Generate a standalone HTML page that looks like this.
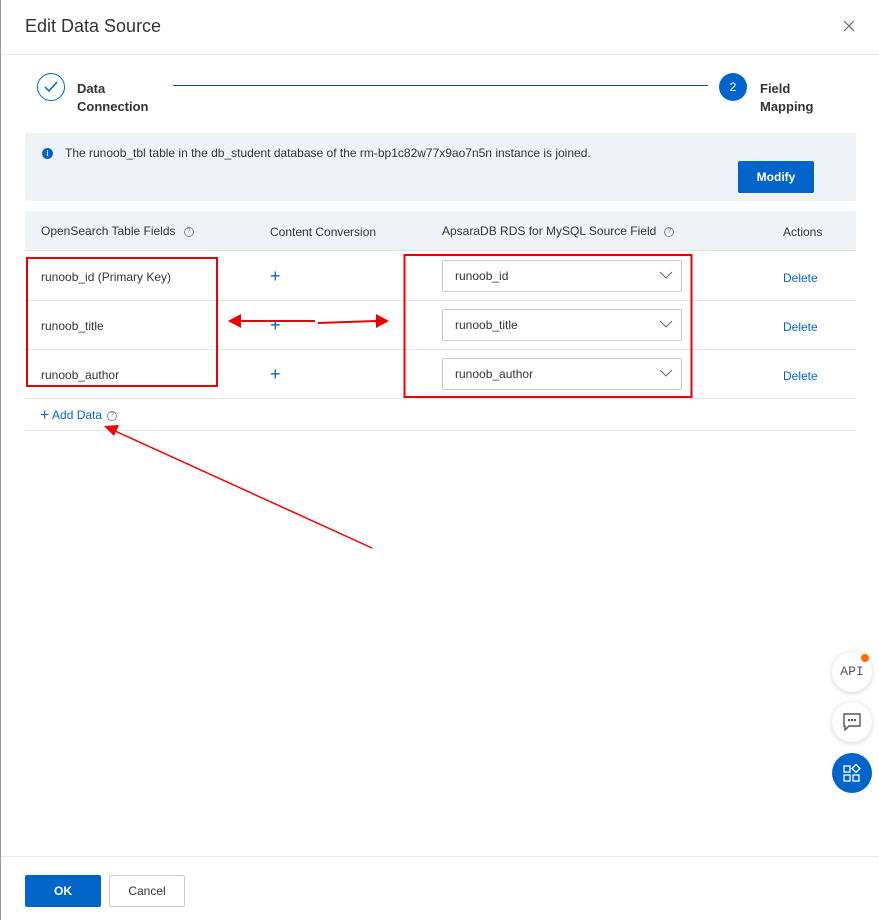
<!DOCTYPE html>
<html><head><meta charset="utf-8"><style>
*{box-sizing:border-box;margin:0;padding:0}
body{width:879px;height:920px;background:#fff;font-family:"Liberation Sans",sans-serif;color:#333;position:relative;overflow:hidden;font-size:12px}
.a{position:absolute}
.hl{position:absolute;left:25px;width:831px;height:1px;background:#e6e6e6}
.sel{position:absolute;left:442px;width:240px;height:32px;border:1px solid #c8c8c8;border-radius:2px;padding-left:12px;line-height:30px;font-size:12px;color:#333}
.sel svg{position:absolute;right:8px;top:10px}
.plus{position:absolute;left:270px;color:#0064c8;font-size:18px;line-height:18px;font-weight:300}
.del{position:absolute;left:783px;color:#0064c8;font-size:12px}
.fld{position:absolute;left:41px;font-size:12px}
.q{display:inline-block;width:10px;height:10px;border:1px solid #888;border-radius:50%;font-size:7px;line-height:8px;text-align:center;color:#888;vertical-align:middle;margin-left:8px}
</style></head><body>
<div class="a" style="left:0;top:0;width:1px;height:920px;background:#999"></div>
<div class="a" style="left:25px;top:16px;font-size:18px;color:#333">Edit Data Source</div>
<svg class="a" style="left:843px;top:20px" width="12" height="12"><path d="M1 1L11 11M11 1L1 11" stroke="#666" stroke-width="1.2"/></svg>
<div class="a" style="left:1px;top:54px;width:878px;height:1px;background:#e8e8e8"></div>
<div class="a" style="left:37px;top:73px;width:28px;height:28px;border:1.5px solid #0064c8;border-radius:50%"></div>
<svg class="a" style="left:44px;top:81px" width="14" height="12"><path d="M1 6L5 10L13 1" stroke="#0064c8" stroke-width="1.5" fill="none"/></svg>
<div class="a" style="left:77px;top:80px;font-size:13px;font-weight:bold;line-height:18px;color:#333">Data<br>Connection</div>
<div class="a" style="left:173px;top:85px;width:535px;height:1px;background:#0a4a8c"></div>
<div class="a" style="left:719px;top:73px;width:28px;height:28px;background:#0064c8;border-radius:50%;color:#fff;text-align:center;line-height:28px;font-size:12px">2</div>
<div class="a" style="left:760px;top:80px;font-size:13px;font-weight:bold;line-height:18px;color:#333">Field<br>Mapping</div>
<div class="a" style="left:25px;top:133px;width:831px;height:68px;background:#eff2f6"></div>
<div class="a" style="left:42px;top:148px;width:11px;height:11px;border-radius:50%;background:#0064c8;color:#fff;font-size:8px;text-align:center;line-height:11px;font-weight:bold">i</div>
<div class="a" style="left:65px;top:146px;font-size:12px;color:#333">The runoob_tbl table in the db_student database of the rm-bp1c82w77x9ao7n5n instance is joined.</div>
<div class="a" style="left:738px;top:161px;width:76px;height:32px;background:#0064c8;border-radius:2px;color:#fff;font-weight:bold;text-align:center;line-height:32px;font-size:12px">Modify</div>
<div class="a" style="left:25px;top:211px;width:831px;height:40px;background:#eff2f6;border-bottom:1px solid #e0e0e0"></div>
<div class="a" style="left:41px;top:224px">OpenSearch Table Fields<span class="q">?</span></div>
<div class="a" style="left:270px;top:225px">Content Conversion</div>
<div class="a" style="left:442px;top:224px">ApsaraDB RDS for MySQL Source Field<span class="q">?</span></div>
<div class="a" style="left:783px;top:225px">Actions</div>
<div class="hl" style="top:300px"></div><div class="hl" style="top:349px"></div><div class="hl" style="top:398px"></div><div class="hl" style="top:430px"></div>
<div class="fld" style="top:270px">runoob_id (Primary Key)</div>
<div class="fld" style="top:319px">runoob_title</div>
<div class="fld" style="top:368px">runoob_author</div>
<div class="plus" style="top:267px">+</div><div class="plus" style="top:316px">+</div><div class="plus" style="top:365px">+</div>
<div class="sel" style="top:260px">runoob_id<svg width="14" height="9"><path d="M1 1L7 7L13 1" stroke="#666" fill="none"/></svg></div>
<div class="sel" style="top:309px">runoob_title<svg width="14" height="9"><path d="M1 1L7 7L13 1" stroke="#666" fill="none"/></svg></div>
<div class="sel" style="top:358px">runoob_author<svg width="14" height="9"><path d="M1 1L7 7L13 1" stroke="#666" fill="none"/></svg></div>
<div class="del" style="top:271px">Delete</div><div class="del" style="top:320px">Delete</div><div class="del" style="top:369px">Delete</div>
<div class="a" style="left:40px;top:407px;color:#0064c8;font-size:12px"><span style="font-size:16px;vertical-align:-1px">+</span> Add Data<span class="q" style="margin-left:5px">?</span></div>
<svg class="a" style="left:0;top:0" width="879" height="920">
<rect x="27" y="258" width="190" height="128" fill="none" stroke="#e00" stroke-width="2"/>
<rect x="404.5" y="255" width="287" height="142" fill="none" stroke="#e00" stroke-width="2"/>
<path d="M315 321L240 321" stroke="#e00" stroke-width="2"/><path d="M228 321L241 314L241 328Z" fill="#e00"/>
<path d="M318 323L376 321" stroke="#e00" stroke-width="2"/><path d="M389 321L376 314L376 328Z" fill="#e00"/>
<path d="M372 548L115 431" stroke="#e00" stroke-width="1.5"/><path d="M104 426L119 425L114 436Z" fill="#e00"/>
</svg>
<div class="a" style="left:832px;top:652px;width:40px;height:40px;border-radius:50%;background:#fff;box-shadow:0 1px 6px rgba(0,0,0,.18);text-align:center;line-height:40px;font-size:13px;color:#555;font-family:'Liberation Mono',monospace">API</div>
<div class="a" style="left:861px;top:654px;width:8px;height:8px;border-radius:50%;background:#ff6a00"></div>
<div class="a" style="left:832px;top:702px;width:40px;height:40px;border-radius:50%;background:#fff;box-shadow:0 1px 6px rgba(0,0,0,.18)"></div>
<svg class="a" style="left:843px;top:713px" width="18" height="18"><path d="M1 1H17V13H6L2 17V13H1Z" fill="none" stroke="#555" stroke-width="1.4"/><rect x="5" y="6" width="2" height="2" fill="#555"/><rect x="8" y="6" width="2" height="2" fill="#555"/><rect x="11" y="6" width="2" height="2" fill="#555"/></svg>
<div class="a" style="left:832px;top:753px;width:40px;height:40px;border-radius:50%;background:#0064c8"></div>
<svg class="a" style="left:843px;top:764px" width="19" height="19"><g fill="none" stroke="#fff" stroke-width="1.3"><rect x="1" y="2" width="6" height="6"/><rect x="1" y="11" width="6" height="6"/><rect x="10" y="11" width="6" height="6"/><path d="M13 0.5L17 4.5L13 8.5L9 4.5Z"/></g></svg>
<div class="a" style="left:1px;top:856px;width:878px;height:1px;background:#e8e8e8"></div>
<div class="a" style="left:25px;top:875px;width:76px;height:32px;background:#0064c8;border-radius:2px;color:#fff;font-weight:bold;text-align:center;line-height:32px">OK</div>
<div class="a" style="left:109px;top:875px;width:76px;height:32px;border:1px solid #c8c8c8;border-radius:2px;text-align:center;line-height:30px;color:#333">Cancel</div>
</body></html>
